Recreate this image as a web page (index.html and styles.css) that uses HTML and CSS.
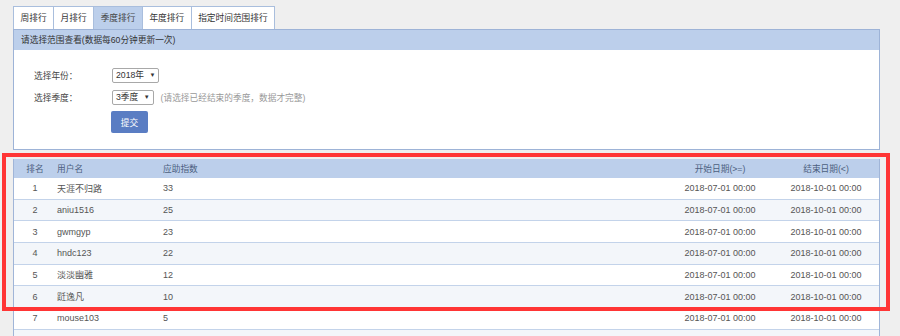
FILE: index.html
```html
<!DOCTYPE html>
<html lang="zh-CN">
<head>
  <meta charset="UTF-8" />
  <title>应助排行</title>
  <link rel="stylesheet" href="styles.css">
</head>
<body>
  <div class="wrap">
    <div class="tabs">
      <div class="tab">周排行</div>
      <div class="tab">月排行</div>
      <div class="tab active">季度排行</div>
      <div class="tab">年度排行</div>
      <div class="tab">指定时间范围排行</div>
    </div>

    <div class="panel">
      <div class="panel-title">请选择范围查看(数据每60分钟更新一次)</div>
      <div class="form">
        <div class="form-row">
          <span class="label">选择年份：</span>
          <span class="select">2018年 <i>▼</i></span>
        </div>
        <div class="form-row">
          <span class="label">选择季度：</span>
          <span class="select">3季度 <i>▼</i></span>
          <span class="hint">(请选择已经结束的季度，数据才完整)</span>
        </div>
        <div class="form-row">
          <span class="label"></span>
          <button class="btn">提交</button>
        </div>
      </div>
    </div>

    <div class="rank-table">
      <div class="tr th">
        <div class="c-rank">排名</div>
        <div class="c-name">用户名</div>
        <div class="c-score">应助指数</div>
        <div class="c-date">开始日期(&gt;=)</div>
        <div class="c-date">结束日期(&lt;)</div>
      </div>
      <div class="tr">
        <div class="c-rank">1</div><div class="c-name">天涯不归路</div><div class="c-score">33</div>
        <div class="c-date">2018-07-01 00:00</div><div class="c-date">2018-10-01 00:00</div>
      </div>
      <div class="tr">
        <div class="c-rank">2</div><div class="c-name">aniu1516</div><div class="c-score">25</div>
        <div class="c-date">2018-07-01 00:00</div><div class="c-date">2018-10-01 00:00</div>
      </div>
      <div class="tr">
        <div class="c-rank">3</div><div class="c-name">gwmgyp</div><div class="c-score">23</div>
        <div class="c-date">2018-07-01 00:00</div><div class="c-date">2018-10-01 00:00</div>
      </div>
      <div class="tr">
        <div class="c-rank">4</div><div class="c-name">hndc123</div><div class="c-score">22</div>
        <div class="c-date">2018-07-01 00:00</div><div class="c-date">2018-10-01 00:00</div>
      </div>
      <div class="tr">
        <div class="c-rank">5</div><div class="c-name">淡淡幽雅</div><div class="c-score">12</div>
        <div class="c-date">2018-07-01 00:00</div><div class="c-date">2018-10-01 00:00</div>
      </div>
      <div class="tr">
        <div class="c-rank">6</div><div class="c-name">跹逸凡</div><div class="c-score">10</div>
        <div class="c-date">2018-07-01 00:00</div><div class="c-date">2018-10-01 00:00</div>
      </div>
      <div class="tr">
        <div class="c-rank">7</div><div class="c-name">mouse103</div><div class="c-score">5</div>
        <div class="c-date">2018-07-01 00:00</div><div class="c-date">2018-10-01 00:00</div>
      </div>
      <div class="tr"></div>
    </div>
  </div>

  <div class="mark"></div>
</body>
</html>
```

FILE: styles.css
```css
body { margin: 0; background: #efefef; font-family: "Liberation Sans", "Noto Sans CJK SC", sans-serif; font-size: 8.7px; color: #444; overflow: hidden; }
.wrap { width: 867px; margin-left: 13px; padding-top: 6px; }

.tabs { display: flex; }
.tab { height: 22px; line-height: 22px; padding: 0 6.5px; background: #fff; border: 1px solid #a9bedd; border-bottom: none; margin-right: -1px; color: #333; }
.tab.active { background: #bccfeb; color: #444; }

.panel { background: #fff; border: 1px solid #9db3d7; }
.panel-title { height: 20px; line-height: 20px; padding-left: 7px; background: #bccfeb; color: #333; }
.form { padding: 18px 20px 16px; display: flex; flex-direction: column; gap: 7px; }
.form-row { display: flex; align-items: center; }
.label { width: 78px; color: #444; }
.select { height: 13px; line-height: 13px; padding: 0 3px; border: 1px solid #a8a8a8; border-radius: 2px; background: #fff; color: #333; }
.select i { font-style: normal; font-size: 6px; margin-left: 3px; vertical-align: 1px; }
.hint { margin-left: 7px; color: #999; }
.btn { width: 37px; height: 22px; margin-left: -1px; margin-top: -1px; border: none; border-radius: 2px; background: #5a7dc3; color: #fff; font: inherit; padding: 0; }

.rank-table { margin-top: 9px; background: #fff; border-left: 1px solid #a0b5d8; border-right: 1px solid #a0b5d8; }
.tr { display: grid; grid-template-columns: 42px 103px 1fr 106px 106px; height: 21.67px; align-items: center; border-bottom: 1px solid #c3d3ea; box-sizing: border-box; color: #555; font-size: 9px; }
.tr:nth-child(odd) { background: #f3f6fa; }
.tr.th { height: 19px; background: #bccfeb; color: #4c5f80; border-bottom: none; font-size: 8.7px; }
.c-rank { text-align: center; }
.c-name { padding-left: 1px; }
.c-score { padding-left: 4px; }
.c-date { text-align: center; }

.mark { position: absolute; left: 2px; top: 153px; width: 880px; height: 150px; border: 4px solid #ff3535; }
```
